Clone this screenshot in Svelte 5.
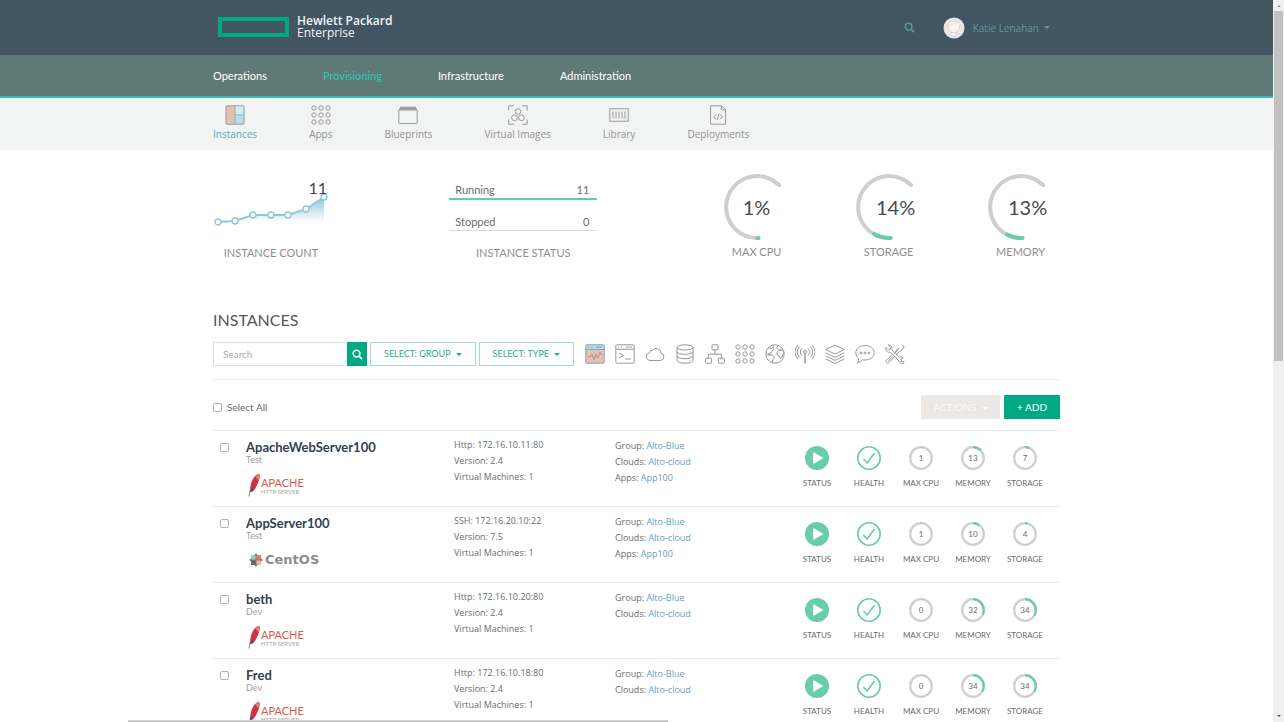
<script>
  const sections = ['Operations', 'Provisioning', 'Infrastructure', 'Administration'];
  const pages = [
    { name: 'Instances', icon: 'instances' },
    { name: 'Apps', icon: 'grid' },
    { name: 'Blueprints', icon: 'blueprint' },
    { name: 'Virtual Images', icon: 'images' },
    { name: 'Library', icon: 'library' },
    { name: 'Deployments', icon: 'deploy' }
  ];
  const counts = [[5, 45], [22, 44], [40, 38], [58, 38], [75, 38], [93, 32], [111, 20]];
  const line = counts.map((p) => p.join(',')).join(' ');
  const gauges = [
    { name: 'MAX CPU', value: 1 },
    { name: 'STORAGE', value: 14 },
    { name: 'MEMORY', value: 13 }
  ];
  const kinds = [
    ['monitor', 'All types'], ['terminal', 'Virtual machines'], ['cloud', 'Cloud'],
    ['database', 'Databases'], ['network', 'Network'], ['grid', 'Apps'], ['globe', 'Web'],
    ['antenna', 'Messaging'], ['layers', 'Cache'], ['chat', 'Chat'], ['tools', 'Utilities']
  ];
  const instances = [
    { name: 'ApacheWebServer100', env: 'Test', logo: 'apache', address: 'Http: 172.16.10.11:80', version: '2.4', app: 'App100', cpu: 1, memory: 13, storage: 7 },
    { name: 'AppServer100', env: 'Test', logo: 'centos', address: 'SSH: 172.16.20.10:22', version: '7.5', app: 'App100', cpu: 1, memory: 10, storage: 4 },
    { name: 'beth', env: 'Dev', logo: 'apache', address: 'Http: 172.16.10.20:80', version: '2.4', app: '', cpu: 0, memory: 32, storage: 34 },
    { name: 'Fred', env: 'Dev', logo: 'apache', address: 'Http: 172.16.10.18:80', version: '2.4', app: '', cpu: 0, memory: 34, storage: 34 }
  ];
  let selected = $state(instances.map(() => false));
  const toggleAll = (e) => { selected = instances.map(() => e.currentTarget.checked); };
</script>

{#snippet icon(name)}
  <svg class="icon" viewBox="0 0 20 20" aria-hidden="true">
    {#if name === 'instances'}
      <rect x="1" y=".8" width="9" height="18.4" fill="#e6bfae" stroke="none" />
      <rect x="10" y=".8" width="9" height="9" fill="#d6ecf4" stroke="none" />
      <rect x="10" y="9.8" width="9" height="9.4" fill="#b9dcea" stroke="none" />
      <rect x="1" y=".8" width="18" height="18.4" rx="1" />
      <path d="M10 1v18M10 9.8h9" stroke="#7fb7cd" />
    {:else if name === 'grid'}
      {#each [3, 10, 17] as y}{#each [3, 10, 17] as x}<circle cx={x} cy={y} r="2.2" />{/each}{/each}
    {:else if name === 'blueprint'}
      <path d="M.8 5h18.4v12.500q0 1-1 1H1.800q-1 0-1-1zM1.500 4.600l1-2.400h15l1 2.400" />
      <path d="M2 3.600h16" stroke-width="2.200" />
    {:else if name === 'images'}
      <path d="M.8 5.500V.8h5M14.200.8h5v4.700M19.200 14.500v4.700h-5M5.800 19.200h-5v-4.700" />
      <circle cx="10" cy="6.500" r="2.800" /><circle cx="6.500" cy="12.800" r="2.900" /><circle cx="13.500" cy="12.800" r="2.900" />
    {:else if name === 'library'}
      <rect x=".8" y="3.800" width="18.400" height="12.400" />
      <path d="M4 6.500v7M7 6.500v7M10 6.500v7M13 6.500v7M16 6.500v7" />
    {:else if name === 'deploy'}
      <path d="M2.600.8h11l4 4v14.400h-15zM13.600.8v4h4M8 9.500l-2.300 2.300L8 14.100M12.300 9.500l2.300 2.300-2.300 2.300M11 8.800l-1.800 6" />
    {:else if name === 'monitor'}
      <rect x=".8" y=".8" width="18.400" height="18.400" fill="#e9c0af" stroke="none" />
      <rect x=".8" y=".8" width="18.400" height="4.700" fill="#b9dcea" stroke="none" />
      <rect x=".8" y=".8" width="18.400" height="18.400" rx="1" stroke="#8ba4ae" />
      <path d="M.8 5.500h18.400M3 3.200h1.500M6 3.200h1.500M11 3.200h6" stroke="#7aa9bd" />
      <path d="M3 12.500h2.500l1.500-2 2 5 2-5 1.500 3.500 2.500-6 .8 2.500H17" />
    {:else if name === 'terminal'}
      <rect x=".8" y=".8" width="18.400" height="18.400" rx="1" />
      <path d="M.8 5.300h18.400M3 3.100h1.200M5.500 3.100h1.200M11 3.100h6M4 9l4.500 2.500L4 14.200M10 15h6" />
    {:else if name === 'cloud'}
      <path d="M4.800 16.500a3.900 3.900 0 0 1-.3-7.700 2.800 2.800 0 0 1 3.200-2.500A4.600 4.600 0 0 1 16 9.200a3.700 3.700 0 0 1-.5 7.300z" />
    {:else if name === 'database'}
      <ellipse cx="10" cy="3.400" rx="8" ry="2.600" />
      <path d="M2 3.400v13c0 3.700 16 3.700 16 0v-13M2 7.600c0 3.600 16 3.600 16 0M2 12c0 3.600 16 3.600 16 0M14.500 8h1M14.500 12.400h1M14.500 16.500h1" />
    {:else if name === 'network'}
      <rect x="7" y=".8" width="6" height="5" rx=".6" />
      <rect x=".6" y="14.200" width="6" height="5" rx=".6" /><rect x="13.400" y="14.200" width="6" height="5" rx=".6" />
      <path d="M10 5.800v4.400M3.600 14.200v-4h12.800v4" />
    {:else if name === 'globe'}
      <circle cx="10" cy="10" r="9.200" />
      <path d="M3.200 4l3.300.3 1.800-1L8 1M8.300 3.300l.8 1.900-2 1.600-.6 2-2.300.2-1 2L1 10M3.200 11l2.300-.6 3 1.600.9 2-1.800 2-.4 3M5.500 10.400l-1 1.800M13 1.300l-1.300 2.900 2.300 2.100 1.800-1 1.800-.6M14 6.300l-2 2 .3 3 2.200.8.9 2.700 2-2 .4-2.300 1.300-2-2.100-2.200-3 .2" />
    {:else if name === 'antenna'}
      <circle cx="10" cy="8" r="1.500" /><path d="M10 9.500V19.500" stroke-width="1.500" />
      <path d="M6.800 11.500a5 5 0 0 1 0-7M13.200 11.500a5 5 0 0 0 0-7M4.400 13.300a8 8 0 0 1 0-10.600M15.600 13.300a8 8 0 0 0 0-10.600M3 15a9.500 9.500 0 0 1 0-14M17 15a9.500 9.500 0 0 0 0-14" />
    {:else if name === 'layers'}
      <path d="M10 1l9.300 4.500L10 10 .7 5.500zM.7 8.800l9.300 4.500 9.300-4.500M.7 11.900l9.300 4.500 9.300-4.500M.7 15l9.300 4.500 9.300-4.500" />
    {:else if name === 'chat'}
      <path d="M10 1.500c5.200 0 9.200 3.100 9.200 7.200s-4 7.300-9.200 7.300q-1.500 0-2.800-.3-2 2.700-4.700 3.300 1.300-2 1-4.500C1.800 13.200.8 11 .8 8.700c0-4.100 4-7.200 9.200-7.200z" />
      <circle cx="6" cy="9" r="1" /><circle cx="10" cy="9" r="1" /><circle cx="14" cy="9" r="1" />
    {:else if name === 'tools'}
      <path d="M3.200.9l2.600 2.600-.6 1.900-1.900.5L.8 3.400c-.6 3 1.500 5.300 4.500 4.800l8.800 8.900c1 3 4.300 3 5.100.9l-3-.6-.3-2.500 2.300-.8c-1-1.300-2.600-1.300-3.500-.9L6.800 5.600C7.600 2.800 6 .9 3.200.9z" />
      <path d="M17.200.8l2 2-3.500 4.400-1.300.4-3.300 3.300M9.400 9.200l3.500-3.400.4-1.500zM7.600 10.500l2 2-5.800 6.200c-1.800 1.200-3.700-.8-2.500-2.600zM3.200 17l4.500-4.600" />
    {/if}
  </svg>
{/snippet}

{#snippet loupe()}
  <svg class="loupe" viewBox="0 0 12 12" aria-hidden="true"><circle cx="5" cy="5" r="3.700" /><path d="M7.800 7.800L11 11" /></svg>
{/snippet}

{#snippet ring(value, label)}
  <div class="stat">
    <div class="dial">
      <svg viewBox="0 0 24 24" aria-hidden="true">
        <circle cx="12" cy="12" r="10.800" stroke="#cfcfce" stroke-width="2.200" />
        <circle cx="12" cy="12" r="10.800" stroke="#69cdaa" stroke-width="2.200" pathLength="100" stroke-dasharray="{value} 100" transform="rotate(-90 12 12)" />
      </svg>
      <b>{value}</b>
    </div>
    <span>{label}</span>
  </div>
{/snippet}

<div class="window">
  <div class="page">
    <header>
      <div class="wrap top">
        <a class="brand" href="#home">
          <i class="frame"></i>
          <span><strong>Hewlett Packard</strong>Enterprise</span>
        </a>
        <div class="account">
          <button class="plain" aria-label="Search">{@render loupe()}</button>
          <button class="plain user">
            <svg class="avatar" viewBox="0 0 22 22" aria-hidden="true">
              <circle cx="11" cy="11" r="10.500" fill="#e9e6e3" />
              <path d="M5 7.500Q7 3 11 4.500 15 3 17 7.500q.5 4.500-3.500 7V18L11 20l-2.500-2v-3.500Q4.500 12 5 7.500z" fill="#f8f6f4" stroke="#d2cdc8" stroke-width=".7" />
              <path d="M6 8q3 1 4.500-1.500Q13 8.500 15 5.500M8.500 15.500h5" fill="none" stroke="#d2cdc8" stroke-width=".7" />
            </svg>
            <span>Katie Lenahan</span><i class="caret"></i>
          </button>
        </div>
      </div>
    </header>
    <nav class="main" aria-label="Main">
      <div class="wrap">
        {#each sections as s}<a href="#{s}" class:on={s === 'Provisioning'}>{s}</a>{/each}
      </div>
    </nav>
    <nav class="sub" aria-label="Provisioning">
      <div class="wrap">
        {#each pages as p}
          <a href="#{p.icon}" class:on={p.name === 'Instances'}>{@render icon(p.icon)}<span>{p.name}</span></a>
        {/each}
      </div>
    </nav>

    <main class="wrap">
      <section class="summary" aria-label="Summary">
        <div class="widget count">
          <div class="chart">
            <svg viewBox="0 0 116 50" aria-hidden="true">
              <defs><linearGradient id="fade" x1="0" y1="0" x2="0" y2="1"><stop offset="0" stop-color="#8fc6da" /><stop offset="1" stop-color="#ffffff" /></linearGradient></defs>
              <polygon points="{line} 111,45" fill="url(#fade)" />
              <polyline points={line} fill="none" stroke="#8fc8da" stroke-width="2" />
              {#each counts as [x, y]}<circle cx={x} cy={y} r="3" fill="#fff" stroke="#8fc4da" stroke-width="1.300" />{/each}
            </svg>
            <b>11</b>
          </div>
          <h3>INSTANCE COUNT</h3>
        </div>
        <div class="widget status">
          <dl>
            <div class="up"><dt>Running</dt><dd>11</dd></div>
            <div><dt>Stopped</dt><dd>0</dd></div>
          </dl>
          <h3>INSTANCE STATUS</h3>
        </div>
        <div class="gauges">
          {#each gauges as g}
            <div class="widget gauge">
              <div class="arc">
                <svg viewBox="0 0 66 66" aria-hidden="true">
                  <path d="M34.500 64A31 31 0 1 1 55 11" stroke="#cfcfce" pathLength="100" />
                  <path d="M34.500 64A31 31 0 1 1 55 11" stroke="#69cdaa" pathLength="100" stroke-dasharray="{g.value} 200" />
                </svg>
                <b class:wide={g.value > 9}>{g.value}%</b>
              </div>
              <h3>{g.name}</h3>
            </div>
          {/each}
        </div>
      </section>

      <h1>INSTANCES</h1>
      <div class="filters">
        <form class="search" onsubmit={(e) => e.preventDefault()}>
          <input type="text" placeholder="Search" aria-label="Search instances" />
          <button aria-label="Search">{@render loupe()}</button>
        </form>
        <button class="pick">SELECT: GROUP <i class="caret"></i></button>
        <button class="pick">SELECT: TYPE <i class="caret"></i></button>
        <div class="kinds">
          {#each kinds as [k, title]}<button class="plain" aria-label={title}>{@render icon(k)}</button>{/each}
        </div>
      </div>

      <div class="bulk">
        <label><input type="checkbox" onchange={toggleAll} />Select All</label>
        <div>
          <button class="actions" disabled>ACTIONS <i class="caret"></i></button>
          <button class="add">+ ADD</button>
        </div>
      </div>

      <ul>
        {#each instances as inst, n}
          <li>
            <input type="checkbox" aria-label="Select {inst.name}" bind:checked={selected[n]} />
            <div class="who">
              <h2>{inst.name}</h2>
              <p>{inst.env}</p>
              {#if inst.logo === 'apache'}
                <div class="apache">
                  <svg viewBox="0 0 13 24" aria-hidden="true">
                    <path d="M1 23.500Q1.500 18 4 13" fill="none" stroke="#8a8080" />
                    <path d="M2.500 18C1.500 11 5 3.500 10.500.5 13 2 11.500 8 7 16 5.500 18 4 19 2.500 18z" fill="#cc3347" />
                    <path d="M7.500 3.500L10.500.5c1.600.8 1.500 3.500.2 7z" fill="#e2836f" />
                    <path d="M2.400 16.500l2.600-.7-.8 3-2 .5z" fill="#554650" />
                  </svg>
                  <span>APACHE<small>HTTP SERVER</small></span>
                </div>
              {:else}
                <div class="centos">
                  <svg viewBox="0 0 14 14" aria-hidden="true">
                    <path d="M2 2h5v5H2z" fill="#9ccbb5" /><path d="M7 2h5v5H7z" fill="#d9806a" />
                    <path d="M2 7h5v5H2z" fill="#6b6873" /><path d="M7 7h5v5H7z" fill="#e6b3a4" />
                    <path d="M7 0l1.800 2.500H5.200zM14 7l-2.500 1.800V5.200zM7 14l-1.800-2.500h3.600zM0 7l2.500-1.800v3.600z" fill="#77737d" />
                    <path d="M7 3v8M3 7h8" stroke="#77737d" stroke-width=".8" />
                  </svg>
                  <span>CentOS</span>
                </div>
              {/if}
            </div>
            <div class="info">
              <p>{inst.address}</p><p>Version: {inst.version}</p><p>Virtual Machines: 1</p>
            </div>
            <div class="info links">
              <p>Group: <a href="#group">Alto-Blue</a></p>
              <p>Clouds: <a href="#cloud">Alto-cloud</a></p>
              {#if inst.app}<p>Apps: <a href="#app">{inst.app}</a></p>{/if}
            </div>
            <div class="stats">
              <div class="stat">
                <div class="dial"><svg viewBox="0 0 24 24" aria-hidden="true"><circle cx="12" cy="12" r="12" fill="#69cdaa" /><path d="M8.800 7v10l8.500-5z" fill="#fff" stroke="#fff" stroke-width="1.300" stroke-linejoin="round" /></svg></div>
                <span>STATUS</span>
              </div>
              <div class="stat">
                <div class="dial"><svg viewBox="0 0 24 24" aria-hidden="true"><circle cx="12" cy="12" r="11.200" stroke="#69cdaa" stroke-width="1.600" /><path d="M6.500 13l3.500 4 7.500-10" stroke="#69cdaa" stroke-width="1.600" /></svg></div>
                <span>HEALTH</span>
              </div>
              {@render ring(inst.cpu, 'MAX CPU')}
              {@render ring(inst.memory, 'MEMORY')}
              {@render ring(inst.storage, 'STORAGE')}
            </div>
          </li>
        {/each}
      </ul>
    </main>
  </div>
  <div class="rail" aria-hidden="true"><i class="up"></i><div class="track"><div class="thumb"></div></div><i class="down"></i></div>
  <div class="shade" aria-hidden="true"></div>
</div>

<style>
  .window { position: relative; display: flex; height: 100vh; overflow: hidden; background: #fff; font: 10px/16px Lato, "Open Sans", sans-serif; color: #6a6d70; }
  .page { flex: 1; min-width: 0; overflow: hidden; }
  .wrap { max-width: 847px; margin: 0 auto; }
  button, input { font: inherit; color: inherit; }
  button { cursor: pointer; padding: 0; }
  a { color: inherit; text-decoration: none; }
  h1, h2, h3, p, ul, dl, dd { margin: 0; padding: 0; font-weight: 400; }
  svg { display: block; fill: none; }
  .plain { border: 0; background: none; }
  .icon { width: 20px; height: 20px; stroke: #9b9897; stroke-width: 1; }
  .loupe { width: 11px; height: 11px; stroke: currentColor; stroke-width: 1.7; }
  .caret { display: inline-block; margin-left: 3px; border: 3px solid transparent; border-top-color: currentColor; border-bottom: 0; vertical-align: middle; }

  header { background: #425563; }
  .top { display: flex; justify-content: space-between; height: 55px; align-items: center; }
  .brand { display: flex; align-items: center; gap: 8px; margin-left: 5px; padding-bottom: 2px; color: #f2f4f5; font: 12px/12px "Open Sans", "Noto Sans", sans-serif; }
  .brand strong { display: block; font-weight: 600; }
  .frame { box-sizing: border-box; width: 71px; height: 20px; border: 4px solid #01a982; }
  .account { display: flex; align-items: center; gap: 28px; margin-right: 10px; color: #5c9a9f; }
  .user { display: flex; align-items: center; gap: 8px; font-family: "Open Sans", sans-serif; font-size: 10px; }
  .user .caret { margin-left: -3px; }
  .avatar { width: 22px; height: 22px; }

  .main { background: #5f7a76; border-bottom: 2px solid #36bfb2; }
  .main .wrap { display: flex; gap: 56px; height: 41px; align-items: center; font-size: 11px; color: #fff; }
  .main .on { color: #2ec5bb; }
  .sub { background: #f2f4f3; }
  .sub .wrap { display: flex; gap: 52px; height: 52px; padding-top: 7px; box-sizing: border-box; color: #949292; font-family: "Open Sans", sans-serif; }
  .sub a { display: flex; flex-direction: column; align-items: center; gap: 1px; }
  .sub .on { color: #5aa5c8; }

  .summary { display: grid; grid-template-columns: 236fr 274fr 336fr; padding-top: 24px; height: 128px; }
  .widget { display: flex; flex-direction: column; align-items: center; }
  h3 { font-size: 11px; color: #8d8f91; white-space: nowrap; }
  .count, .status { justify-self: start; }
  .chart { position: relative; }
  .chart svg { width: 116px; height: 50px; margin: 3px 0 18px; }
  .chart b { position: absolute; top: 4px; right: 2px; font-size: 16px; font-weight: 400; line-height: 20px; color: #3f4448; }
  dl { width: 148px; display: grid; gap: 9px; padding-top: 3px; font-size: 11px; margin-bottom: 14px; }
  dl div { display: flex; justify-content: space-between; padding: 5px 8px 0 6px; height: 16px; border-bottom: 1px solid #d9dbdb; }
  dl .up { border-bottom: 2px solid #5fcfa6; }
  .gauges { display: flex; gap: 66px; }
  .gauge { width: 66px; }
  .arc, .dial { display: grid; place-items: center; }
  .arc > *, .dial > * { grid-area: 1 / 1; }
  .arc { margin-bottom: 4px; }
  .arc svg { width: 66px; height: 66px; stroke-width: 4; stroke-linecap: round; }
  .arc b { font-size: 20px; font-weight: 400; color: #454c52; }
  .arc .wide { padding-left: 14px; }

  h1 { margin-top: 8px; font-size: 16px; line-height: 20px; color: #53565a; }
  .filters { display: flex; align-items: center; margin-top: 12px; padding-bottom: 13px; border-bottom: 1px solid #f1f1f1; }
  .search { display: flex; height: 24px; }
  .search input { box-sizing: border-box; width: 134px; border: 1px solid #dedfdf; border-right: 0; padding: 0 9px; outline: 0; background: #fff; }
  .search input::placeholder { color: #a9a9a9; }
  .search button { width: 20px; border: 0; background: #01a982; color: #fff; display: grid; place-items: center; }
  .pick { height: 24px; margin-left: 3px; padding: 0 13px; border: 1px solid #a5d4e2; background: #fff; color: #1fae8b; font-size: 9px; white-space: nowrap; }
  .kinds { display: flex; gap: 10px; margin-left: 11px; }

  .bulk { display: flex; justify-content: space-between; align-items: center; padding: 15px 0 11px; }
  .bulk label { display: flex; align-items: center; gap: 5px; }
  .bulk div { display: flex; gap: 4px; }
  .bulk button { height: 24px; padding: 0 12px; border: 0; }
  .actions { background: #ebe8e6; color: #fbfafa; }
  .bulk .add { padding: 0 13px; background: #01a982; color: #fff; border-radius: 1px; }
  input[type='checkbox'] { appearance: none; box-sizing: border-box; width: 9px; height: 9px; margin: 0; border: 1px solid #b5b2b0; border-radius: 2px; background: #fff; }
  input[type='checkbox']:checked { background: #01a982; }

  ul { list-style: none; }
  li { display: grid; grid-template-columns: 26px 208px 161px 1fr auto; height: 75px; border-top: 1px solid #e9e9e9; padding: 0 9px 0 7px; }
  li > input { align-self: start; }
  li > input[type='checkbox'] { margin-top: 12px; }
  .who { padding-top: 8px; }
  h2 { font-size: 13px; line-height: 16px; font-weight: 700; color: #33414b; }
  .who p { font-size: 9px; line-height: 10px; color: #a0a2a3; }
  .apache { display: flex; margin: 8px 0 0 2px; color: #d95b4a; }
  .apache svg { width: 13px; height: 24px; }
  .apache span { font-size: 11px; line-height: 10px; padding-top: 5px; }
  .apache small { display: block; font-size: 6px; line-height: 7px; color: #a9a5a5; }
  .centos { display: flex; align-items: center; gap: 2px; margin: 12px 0 0 3px; color: #8d8b92; font: 700 13px/14px "DejaVu Sans", sans-serif; }
  .centos svg { width: 14px; height: 14px; }
  .info { padding-top: 6px; font-family: "Open Sans", sans-serif; font-size: 9px; }
  .links { padding-top: 7px; }
  .info a { color: #619fc0; }
  .stats { display: grid; grid-template-columns: repeat(5, 52px); padding-top: 15px; }
  .stat { display: flex; flex-direction: column; align-items: center; gap: 5px; font-size: 8px; white-space: nowrap; }
  .dial svg { width: 24px; height: 24px; }
  .dial b { font-size: 8px; font-weight: 400; }

  .rail { display: flex; flex-direction: column; align-items: center; justify-content: space-between; width: 11px; background: #f0f0f0; }
  .track { flex: 1; width: 9px; }
  .thumb { height: 50%; background: #c1c1c1; }
  .rail i { border: 2px solid transparent; }
  .rail .up { border-bottom-color: #8b8b8b; margin: 3px 0 4px; }
  .rail .down { border-top-color: #555; margin: 4px 0 3px; }
  .shade { position: absolute; bottom: 0; left: 10%; width: 42%; height: 2px; background: linear-gradient(#e4e4e4, #a9a9a9); }
</style>
